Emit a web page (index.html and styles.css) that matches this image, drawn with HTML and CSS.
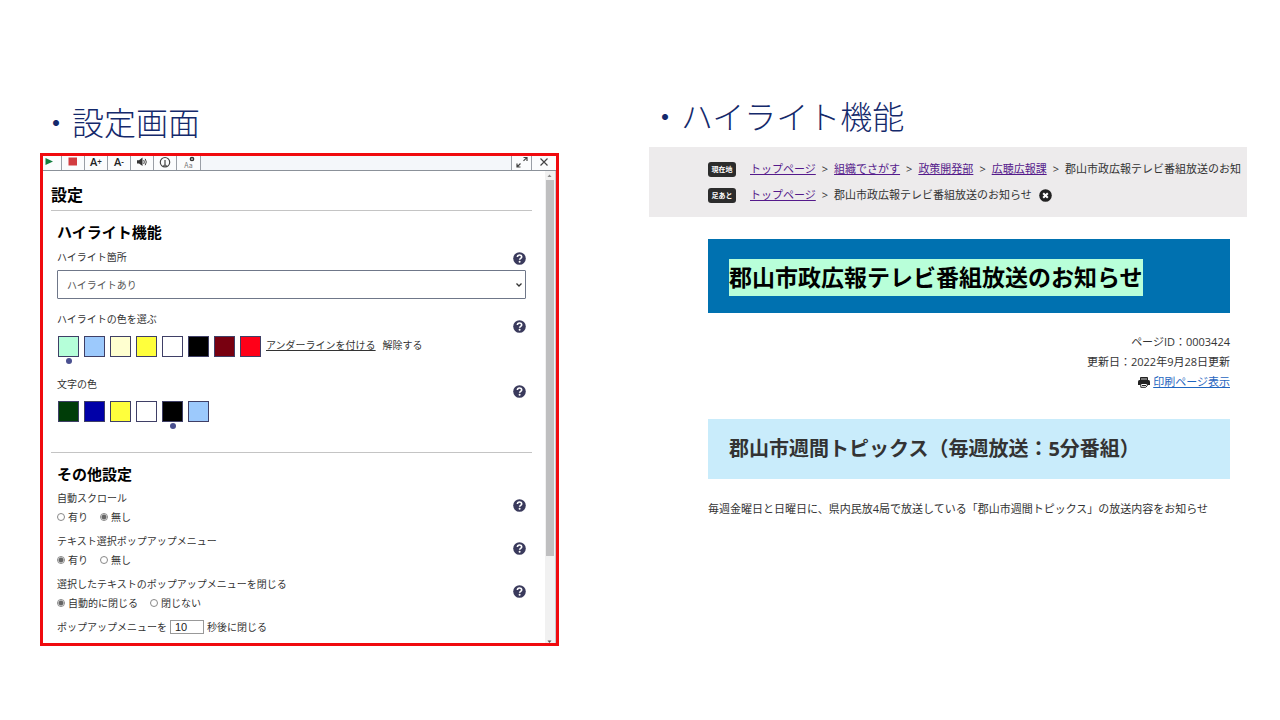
FILE: index.html
```html
<!DOCTYPE html>
<html lang="ja">
<head>
<meta charset="utf-8">
<meta name="viewport" content="width=device-width, initial-scale=1">
<title>設定画面・ハイライト機能</title>
<link rel="stylesheet" href="styles.css">
</head>
<body>
<svg width="0" height="0" class="defs" aria-hidden="true">
  <symbol id="help" viewBox="0 0 13 13">
    <circle cx="6.5" cy="6.5" r="6.3" fill="#3a3a5c"/>
    <path d="M4.4 5.1C4.4 2.4 8.7 2.4 8.7 4.9C8.7 6.3 6.7 6.3 6.6 7.8" fill="none" stroke="#fff" stroke-width="1.6"/>
    <circle cx="6.6" cy="9.8" r="1" fill="#fff"/>
  </symbol>
</svg>
<main class="slide">
  <section class="left">
    <h2 class="caption">・設定画面</h2>
    <div class="panel">
      <div class="toolbar">
        <button class="tool play" aria-label="再生"><svg viewBox="0 0 16 14"><path d="M1.500 2L9 5.500L1.500 9Z" fill="#148040"/></svg></button>
        <button class="tool" aria-label="停止"><svg viewBox="0 0 16 14"><path d="M3.500 1.500h8.500v8H3.500z" fill="#d23c40"/></svg></button>
        <button class="tool letter" aria-label="文字を大きく">A<sup>+</sup></button>
        <button class="tool letter" aria-label="文字を小さく">A<sup>-</sup></button>
        <button class="tool" aria-label="音量"><svg viewBox="0 0 16 14"><path d="M3 4.200h2L8.500 1.500v8.500L5 7.500H3z" fill="#333"/><path d="M9.700 4q1.200 2 0 4M11.200 2.800q2.200 3.200 0 6.400" fill="none" stroke="#444"/></svg></button>
        <button class="tool" aria-label="速度"><svg viewBox="0 0 16 14"><circle cx="8" cy="6.200" r="4.700" fill="none" stroke="#444" stroke-width="1.200"/><path d="M8 4v5M6.500 10q1.500-2 3 0" fill="none" stroke="#444" stroke-width="1.200"/></svg></button>
        <button class="tool aa" aria-label="文字設定"><span>Aa</span><svg viewBox="0 0 16 14"><circle cx="11" cy="3" r="1.600" fill="none" stroke="#333" stroke-width="1.500"/></svg></button>
        <button class="tool expand" aria-label="拡大"><svg viewBox="0 0 16 14"><path d="M9.500 4.800L12.500 1.800M9.500 1.500h3.500V5M6.500 7.500L3.500 10.500M3 7.500V11h3.500" fill="none" stroke="#444" stroke-width="1.200"/></svg></button>
        <button class="tool close" aria-label="閉じる"><svg viewBox="0 0 16 14"><path d="M4.500 2.500l7 7M11.500 2.500l-7 7" fill="none" stroke="#444" stroke-width="1.200"/></svg></button>
      </div>
      <div class="panel-body">
        <form class="settings">
          <h3 class="title">設定</h3>
          <section class="group">
            <h4>ハイライト機能</h4>
            <div class="field">
              <label for="place">ハイライト箇所</label>
              <button type="button" class="help" aria-label="ヘルプ"><svg><use href="#help"/></svg></button>
            </div>
            <div class="select-box">
              <select id="place"><option>ハイライトあり</option></select>
              <svg viewBox="0 0 8 6"><path d="M1.500 1.500L4 4l2.500-2.500" fill="none" stroke="#333" stroke-width="1.300"/></svg>
            </div>
            <div class="field">
              <div>
                <p>ハイライトの色を選ぶ</p>
                <div class="swatches">
                  <button type="button" class="swatch mint selected" aria-label="緑"></button>
                  <button type="button" class="swatch sky" aria-label="青"></button>
                  <button type="button" class="swatch cream" aria-label="クリーム"></button>
                  <button type="button" class="swatch yellow" aria-label="黄"></button>
                  <button type="button" class="swatch white" aria-label="白"></button>
                  <button type="button" class="swatch black" aria-label="黒"></button>
                  <button type="button" class="swatch maroon" aria-label="えんじ"></button>
                  <button type="button" class="swatch red" aria-label="赤"></button>
                  <a href="#">アンダーラインを付ける</a>
                  <a href="#" class="clear">解除する</a>
                </div>
              </div>
              <button type="button" class="help low" aria-label="ヘルプ"><svg><use href="#help"/></svg></button>
            </div>
            <div class="field text-color">
              <div>
                <p>文字の色</p>
                <div class="swatches">
                  <button type="button" class="swatch green" aria-label="深緑"></button>
                  <button type="button" class="swatch navy" aria-label="紺"></button>
                  <button type="button" class="swatch yellow" aria-label="黄"></button>
                  <button type="button" class="swatch white" aria-label="白"></button>
                  <button type="button" class="swatch black selected" aria-label="黒"></button>
                  <button type="button" class="swatch sky" aria-label="水色"></button>
                </div>
              </div>
              <button type="button" class="help low" aria-label="ヘルプ"><svg><use href="#help"/></svg></button>
            </div>
          </section>
          <section class="group other">
            <h4>その他設定</h4>
            <div class="field">
              <div role="radiogroup" aria-labelledby="r1">
                <p id="r1">自動スクロール</p>
                <div class="radios">
                  <label><input type="radio" name="scroll">有り</label>
                  <label><input type="radio" name="scroll" checked>無し</label>
                </div>
              </div>
              <button type="button" class="help low" aria-label="ヘルプ"><svg><use href="#help"/></svg></button>
            </div>
            <div class="field">
              <div role="radiogroup" aria-labelledby="r2">
                <p id="r2">テキスト選択ポップアップメニュー</p>
                <div class="radios">
                  <label><input type="radio" name="popup" checked>有り</label>
                  <label><input type="radio" name="popup">無し</label>
                </div>
              </div>
              <button type="button" class="help low" aria-label="ヘルプ"><svg><use href="#help"/></svg></button>
            </div>
            <div class="field">
              <div role="radiogroup" aria-labelledby="r3">
                <p id="r3">選択したテキストのポップアップメニューを閉じる</p>
                <div class="radios">
                  <label><input type="radio" name="closing" checked>自動的に閉じる</label>
                  <label><input type="radio" name="closing">閉じない</label>
                </div>
              </div>
              <button type="button" class="help low" aria-label="ヘルプ"><svg><use href="#help"/></svg></button>
            </div>
            <div class="seconds">
              <label for="sec">ポップアップメニューを</label>
              <input id="sec" type="text" value="10">
              <span>秒後に閉じる</span>
            </div>
          </section>
        </form>
        <div class="scrollbar" aria-hidden="true">
          <svg viewBox="0 0 9 9"><path d="M2.500 6h4L4.500 3.500z" fill="#888"/></svg>
          <div class="track"><div class="thumb"></div></div>
          <svg class="down" viewBox="0 0 9 4"><path d="M2.500 1.500h4L4.500 4z" fill="#555"/></svg>
        </div>
      </div>
    </div>
  </section>

  <section class="right">
    <h2 class="caption">・ハイライト機能</h2>
    <div class="crumbs">
      <nav class="crumb-row" aria-label="現在地">
        <span class="badge">現在地</span>
        <p><a href="#">トップページ</a><i>&gt;</i><a href="#">組織でさがす</a><i>&gt;</i><a href="#">政策開発部</a><i>&gt;</i><a href="#">広聴広報課</a><i>&gt;</i>郡山市政広報テレビ番組放送のお知</p>
      </nav>
      <nav class="crumb-row" aria-label="足あと">
        <span class="badge">足あと</span>
        <p><a href="#">トップページ</a><i>&gt;</i>郡山市政広報テレビ番組放送のお知らせ</p>
        <button class="remove" aria-label="削除"><svg viewBox="0 0 13 13"><circle cx="6.500" cy="6.500" r="6.300" fill="#222"/><path d="M4.200 4.200l4.600 4.600M8.800 4.200l-4.600 4.600" stroke="#fff" stroke-width="2"/></svg></button>
      </nav>
    </div>
    <article class="page">
      <h1><mark>郡山市政広報テレビ番組放送のお知らせ</mark></h1>
      <div class="meta">
        <p>ページID：0003424</p>
        <p>更新日：2022年9月28日更新</p>
        <p class="print"><svg viewBox="0 0 12 12"><path d="M2.500 1.500h7v3h-7z" fill="#777" stroke="#222"/><path d="M1.500 4h9q1.500 0 1.500 1.500V9H0V5.500Q0 4 1.500 4z" fill="#222"/><path d="M2.800 7.500h6.400v2.300l-1.500 1.500H2.800z" fill="#fff" stroke="#222"/><path d="M4 9.500h4" stroke="#222"/></svg><a href="#">印刷ページ表示</a></p>
      </div>
      <h2 class="topic">郡山市週間トピックス（毎週放送：5分番組）</h2>
      <p class="text">毎週金曜日と日曜日に、県内民放4局で放送している「郡山市週間トピックス」の放送内容をお知らせ</p>
    </article>
  </section>
</main>
</body>
</html>
```
FILE: styles.css
```css
* { box-sizing: border-box; }
body, h1, h2, h3, h4, p { margin: 0; }
body {
  background: #fff;
  color: #333;
  font-family: "Noto Sans CJK JP", sans-serif;
  font-size: 10px;
  line-height: 16px;
}
button { padding: 0; border: 0; background: none; font: inherit; color: inherit; }
svg { display: block; }
.defs { position: absolute; }

.slide {
  display: grid;
  grid-template-columns: 519fr 598fr;
  gap: 90px;
  align-items: start;
  padding: 93px 33px 0 40px;
}
.caption {
  color: #14296b;
  font-size: 32px;
  font-weight: 300;
  line-height: 56px;
  padding-bottom: 4px;
  white-space: nowrap;
}

/* settings window */
.panel { border: 3px solid #f00a0e; }
.toolbar { display: flex; height: 15px; background: #f4f7fa; border-bottom: 1px solid #8b9199; }
.tool {
  display: flex;
  align-items: center;
  justify-content: center;
  width: 23px;
  border-right: 1px solid #9a9fa6;
  background: #fbfcfd;
}
.tool svg { width: 16px; height: 14px; }
.play { width: 19px; }
.letter { padding-bottom: 3px; font: 600 11px/14px "Open Sans", sans-serif; color: #222; }
.letter sup { font-size: 8px; line-height: 8px; }
.aa { position: relative; width: 24px; }
.aa span { font-size: 7px; line-height: 7px; padding-top: 4px; color: #777; }
.aa svg { position: absolute; left: 4px; top: 0; }
.expand { margin-left: auto; width: 21px; border-left: 1px solid #9a9fa6; }
.close { width: 24px; border: 0; }

.panel-body { display: flex; }
.settings { flex: 1; padding: 11px 13px 8px 8px; }
.title {
  padding-bottom: 4px;
  border-bottom: 1px solid #c4c4c4;
  color: #000;
  font-size: 16px;
  line-height: 24px;
}
.group { padding: 9px 6px 0; }
h4 { margin: 0 0 5px; color: #000; font-size: 15px; line-height: 24px; }
.field { display: flex; justify-content: space-between; align-items: flex-start; }
.help { width: 13px; height: 13px; margin-top: 3px; flex: none; }
.help svg { width: 13px; height: 13px; }
.help.low { margin-top: 9px; }
.select-box { position: relative; margin: 5px 0 12px; }
.select-box select {
  display: block;
  width: 100%;
  height: 29px;
  padding: 0 9px;
  appearance: none;
  border: 1px solid #6f7789;
  border-radius: 1px;
  background: #fff;
  color: #555;
  font: inherit;
}
.select-box svg { position: absolute; right: 3px; top: 12px; width: 8px; height: 6px; }
.swatches { display: flex; align-items: center; gap: 5px; margin-top: 9px; padding-left: 1px; }
.swatch { position: relative; width: 21px; height: 21px; border: 1px solid #3f3f66; }
.selected::after {
  content: "";
  position: absolute;
  left: 7px;
  top: 21px;
  width: 6px;
  height: 6px;
  border-radius: 50%;
  background: #4a5090;
}
.mint { background: #b5ffd9; }
.sky { background: #9cc9fc; }
.cream { background: #ffffd0; }
.yellow { background: #ffff3c; }
.white { background: #fff; }
.black { background: #000; }
.maroon { background: #780010; }
.red { background: #ff0018; }
.green { background: #003d08; }
.navy { background: #0000a8; }
.swatches a { padding-bottom: 3px; color: #333; white-space: nowrap; text-underline-offset: 1px; }
.swatches .clear { margin-left: 2px; text-decoration: none; }
.text-color { margin: 19px 0 30px; }
.group.other { padding-top: 0; }
.other h4 { margin: 0 -6px 4px; padding: 9px 6px 0; border-top: 1px solid #c4c4c4; }
.other .field { margin-bottom: 8px; }
.radios { display: flex; gap: 12px; margin-top: 3px; }
.radios label { display: flex; align-items: center; gap: 3px; }
.radios input {
  appearance: none;
  width: 8px;
  height: 8px;
  margin: 0;
  border: 1px solid #888;
  border-radius: 50%;
  background: #fff;
}
.radios input:checked { background: radial-gradient(circle, #666 2px, #fff 3px); }
.seconds { display: flex; align-items: center; gap: 3px; height: 16px; }
.seconds input {
  width: 34px;
  height: 14px;
  padding: 0 4px;
  border: 1px solid #999;
  color: #222;
  font: 11px "Liberation Sans", sans-serif;
}
.scrollbar { display: flex; flex-direction: column; width: 11px; border-right: 1px solid #c8c8d0; background: #f1f1f1; }
.scrollbar svg { width: 9px; height: 9px; }
.scrollbar .down { height: 4px; }
.track { flex: 1; }
.thumb { height: 82%; width: 8px; margin-left: 1px; background: #bfbfc0; }

/* web page sample */
.right { font-family: "Open Sans", "Noto Sans CJK JP", sans-serif; }
.right .caption { padding-bottom: 10px; line-height: 44px; font-family: "Noto Sans CJK JP", sans-serif; }
.crumbs { padding: 12px 0 12px 59px; background: #edebec; }
.crumb-row { display: flex; align-items: center; height: 20px; font-size: 11px; white-space: nowrap; }
.crumb-row + .crumb-row { margin-top: 6px; }
.badge {
  width: 28px;
  margin-right: 14px;
  border-radius: 3px;
  background: #2c2c2c;
  color: #fff;
  font-size: 7px;
  font-weight: bold;
  line-height: 15px;
  text-align: center;
}
.crumb-row a { color: #551a8b; text-underline-offset: 1px; }
.crumb-row i { padding: 0 6px; font-style: normal; }
.remove { width: 13px; height: 13px; margin-left: 7px; }
.page { padding: 22px 17px 0 59px; }
h1 { padding: 20px 21px 17px; background: #0071b0; color: #000; font-size: 23px; line-height: 37px; white-space: nowrap; }
mark { display: block; width: max-content; background: #b8ffd9; color: #000; }
.meta { margin-top: 19px; font-size: 11px; line-height: 20px; text-align: right; }
.print { display: flex; justify-content: flex-end; align-items: center; gap: 3px; }
.print svg { width: 12px; height: 12px; }
.print a { color: #1f66c0; text-underline-offset: 1px; }
.topic { margin-top: 27px; padding: 15px 21px; background: #c9ecfb; font-size: 20px; line-height: 30px; white-space: nowrap; }
.text { margin-top: 20px; font-size: 11px; line-height: 20px; white-space: nowrap; }
```
